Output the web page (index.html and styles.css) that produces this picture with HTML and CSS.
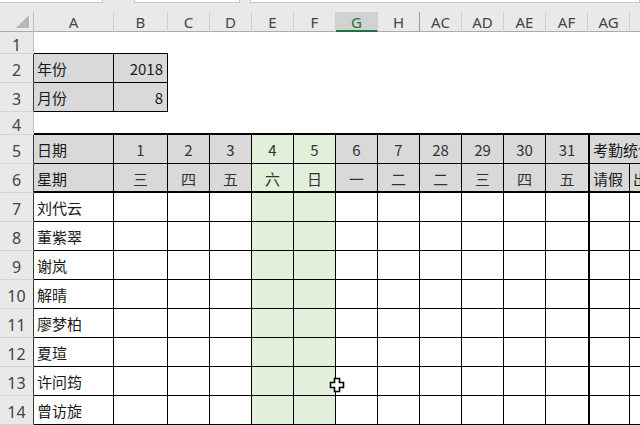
FILE: index.html
```html
<!DOCTYPE html>
<html lang="zh-CN">
<head>
<meta charset="utf-8">
<title>考勤表</title>
<link rel="stylesheet" href="styles.css">
</head>
<body>
<div class="app">
  <div class="fbar">
    <div class="fbox name"></div>
    <div class="fbox mid"></div>
    <div class="fbox formula"></div>
  </div>
  <div class="sheet">
    <!-- column headers -->
    <div class="ch corner"><span class="tri"></span></div>
    <div class="ch">A</div>
    <div class="ch">B</div>
    <div class="ch">C</div>
    <div class="ch">D</div>
    <div class="ch">E</div>
    <div class="ch">F</div>
    <div class="ch sel">G</div>
    <div class="ch hid">H</div>
    <div class="ch">AC</div>
    <div class="ch">AD</div>
    <div class="ch">AE</div>
    <div class="ch">AF</div>
    <div class="ch">AG</div>
    <div class="ch">AH</div>

    <!-- row 1 -->
    <div class="rh">1</div>
    <div class="cell bb"></div><div class="cell bb"></div>
    <div class="cell"></div><div class="cell"></div><div class="cell"></div><div class="cell"></div><div class="cell"></div><div class="cell"></div>
    <div class="cell"></div><div class="cell"></div><div class="cell"></div><div class="cell"></div><div class="cell"></div><div class="cell"></div>

    <!-- row 2 -->
    <div class="rh rk">2</div>
    <div class="cell k g l">年份</div><div class="cell k g r">2018</div>
    <div class="cell"></div><div class="cell"></div><div class="cell"></div><div class="cell"></div><div class="cell"></div><div class="cell"></div>
    <div class="cell"></div><div class="cell"></div><div class="cell"></div><div class="cell"></div><div class="cell"></div><div class="cell"></div>

    <!-- row 3 -->
    <div class="rh rk">3</div>
    <div class="cell k g l">月份</div><div class="cell k g r">8</div>
    <div class="cell"></div><div class="cell"></div><div class="cell"></div><div class="cell"></div><div class="cell"></div><div class="cell"></div>
    <div class="cell"></div><div class="cell"></div><div class="cell"></div><div class="cell"></div><div class="cell"></div><div class="cell"></div>

    <!-- row 4 -->
    <div class="rh">4</div>
    <div class="cell bb2"></div><div class="cell bb2"></div><div class="cell bb2"></div><div class="cell bb2"></div><div class="cell bb2"></div><div class="cell bb2"></div><div class="cell bb2"></div>
    <div class="cell bb2"></div><div class="cell bb2"></div><div class="cell bb2"></div><div class="cell bb2"></div><div class="cell bb2"></div><div class="cell bb2"></div><div class="cell bb2"></div>

    <!-- row 5 -->
    <div class="rh rk">5</div>
    <div class="cell k g l">日期</div>
    <div class="cell k g c">1</div>
    <div class="cell k g c">2</div>
    <div class="cell k g c">3</div>
    <div class="cell k gr c">4</div>
    <div class="cell k gr c">5</div>
    <div class="cell k g c">6</div>
    <div class="cell k g c">7</div>
    <div class="cell k g c">28</div>
    <div class="cell k g c">29</div>
    <div class="cell k g c">30</div>
    <div class="cell k g c nr">31</div>
    <div class="cell k g l bl2 span2">考勤统计</div>

    <!-- row 6 -->
    <div class="rh rk">6</div>
    <div class="cell k g l bb2">星期</div>
    <div class="cell k g c bb2">三</div>
    <div class="cell k g c bb2">四</div>
    <div class="cell k g c bb2">五</div>
    <div class="cell k gr c bb2">六</div>
    <div class="cell k gr c bb2">日</div>
    <div class="cell k g c bb2">一</div>
    <div class="cell k g c bb2">二</div>
    <div class="cell k g c bb2">二</div>
    <div class="cell k g c bb2">三</div>
    <div class="cell k g c bb2">四</div>
    <div class="cell k g c bb2 nr">五</div>
    <div class="cell k g l bb2 bl2">请假</div>
    <div class="cell k g l bb2">出勤</div>

    <!-- row 7 -->
    <div class="rh rk">7</div>
    <div class="cell k l">刘代云</div>
    <div class="cell k"></div><div class="cell k"></div><div class="cell k"></div>
    <div class="cell k gr"></div><div class="cell k gr"></div>
    <div class="cell k"></div><div class="cell k"></div><div class="cell k"></div><div class="cell k"></div><div class="cell k"></div>
    <div class="cell k nr"></div><div class="cell k bl2"></div><div class="cell k"></div>

    <!-- row 8 -->
    <div class="rh rk">8</div>
    <div class="cell k l">董紫翠</div>
    <div class="cell k"></div><div class="cell k"></div><div class="cell k"></div>
    <div class="cell k gr"></div><div class="cell k gr"></div>
    <div class="cell k"></div><div class="cell k"></div><div class="cell k"></div><div class="cell k"></div><div class="cell k"></div>
    <div class="cell k nr"></div><div class="cell k bl2"></div><div class="cell k"></div>

    <!-- row 9 -->
    <div class="rh rk">9</div>
    <div class="cell k l">谢岚</div>
    <div class="cell k"></div><div class="cell k"></div><div class="cell k"></div>
    <div class="cell k gr"></div><div class="cell k gr"></div>
    <div class="cell k"></div><div class="cell k"></div><div class="cell k"></div><div class="cell k"></div><div class="cell k"></div>
    <div class="cell k nr"></div><div class="cell k bl2"></div><div class="cell k"></div>

    <!-- row 10 -->
    <div class="rh rk">10</div>
    <div class="cell k l">解晴</div>
    <div class="cell k"></div><div class="cell k"></div><div class="cell k"></div>
    <div class="cell k gr"></div><div class="cell k gr"></div>
    <div class="cell k"></div><div class="cell k"></div><div class="cell k"></div><div class="cell k"></div><div class="cell k"></div>
    <div class="cell k nr"></div><div class="cell k bl2"></div><div class="cell k"></div>

    <!-- row 11 -->
    <div class="rh rk">11</div>
    <div class="cell k l">廖梦柏</div>
    <div class="cell k"></div><div class="cell k"></div><div class="cell k"></div>
    <div class="cell k gr"></div><div class="cell k gr"></div>
    <div class="cell k"></div><div class="cell k"></div><div class="cell k"></div><div class="cell k"></div><div class="cell k"></div>
    <div class="cell k nr"></div><div class="cell k bl2"></div><div class="cell k"></div>

    <!-- row 12 -->
    <div class="rh rk">12</div>
    <div class="cell k l">夏瑄</div>
    <div class="cell k"></div><div class="cell k"></div><div class="cell k"></div>
    <div class="cell k gr"></div><div class="cell k gr"></div>
    <div class="cell k"></div><div class="cell k"></div><div class="cell k"></div><div class="cell k"></div><div class="cell k"></div>
    <div class="cell k nr"></div><div class="cell k bl2"></div><div class="cell k"></div>

    <!-- row 13 -->
    <div class="rh rk">13</div>
    <div class="cell k l">许问筠</div>
    <div class="cell k"></div><div class="cell k"></div><div class="cell k"></div>
    <div class="cell k gr"></div><div class="cell k gr"></div>
    <div class="cell k"></div><div class="cell k"></div><div class="cell k"></div><div class="cell k"></div><div class="cell k"></div>
    <div class="cell k nr"></div><div class="cell k bl2"></div><div class="cell k"></div>

    <!-- row 14 -->
    <div class="rh rk">14</div>
    <div class="cell k l">曾访旋</div>
    <div class="cell k"></div><div class="cell k"></div><div class="cell k"></div>
    <div class="cell k gr"></div><div class="cell k gr"></div>
    <div class="cell k"></div><div class="cell k"></div><div class="cell k"></div><div class="cell k"></div><div class="cell k"></div>
    <div class="cell k nr"></div><div class="cell k bl2"></div><div class="cell k"></div>
  </div>
  <svg class="cursor" width="16" height="16" viewBox="0 0 16 16" aria-hidden="true">
    <path d="M5.5 1.5 H10.5 V5.5 H14.5 V10.5 H10.5 V14.5 H5.5 V10.5 H1.5 V5.5 H5.5 Z" fill="#fff" stroke="#000" stroke-width="1.6" stroke-linejoin="miter"/>
  </svg>
</div>
</body>
</html>
```
FILE: styles.css
```css
html, body {
  margin: 0;
  padding: 0;
  background: #fff;
  overflow: hidden;
}
.app {
  position: relative;
  width: 640px;
  height: 425px;
  overflow: hidden;
  font-family: "Noto Sans CJK SC", "Noto Sans", sans-serif;
}
.fbar {
  height: 12px;
  background: #e9e9e9;
  display: flex;
  align-items: flex-start;
}
.fbox {
  height: 3px;
  background: #fff;
  border: 1px solid #c8c8c8;
  border-top: none;
  box-sizing: border-box;
}
.fbox.name { width: 107px; margin-left: -1px; }
.fbox.mid { width: 108px; margin-left: 31px; }
.fbox.formula { width: 400px; margin-left: 10px; }

.sheet {
  display: grid;
  grid-template-columns: 34px 80px 54px repeat(12, 42px);
  grid-template-rows: 20px 22px 29px 29px 23px 29px 29px repeat(8, 29px);
  width: 700px;
}
.ch {
  background: #e9e9e9;
  border-right: 1px solid #d0d0d0;
  border-bottom: 1px solid #ababab;
  box-sizing: border-box;
  display: flex;
  align-items: center;
  justify-content: center;
  font-family: "Noto Sans", "Open Sans", sans-serif;
  font-size: 15px;
  color: #444;
  padding-top: 1px;
}
.ch.corner {
  position: relative;
  border-right: 1px solid #bdbdbd;
}
.tri {
  position: absolute;
  right: 4px;
  bottom: 3px;
  width: 0;
  height: 0;
  border-left: 13px solid transparent;
  border-bottom: 13px solid #b7b7b7;
}
.ch.sel {
  background: #d2d2d2;
  color: #217346;
  border-bottom: 2px solid #217346;
}
.ch.hid {
  border-right: 1px solid #9a9a9a;
}
.rh {
  background: #e9e9e9;
  border-right: 1px solid #bdbdbd;
  border-bottom: 1px solid #d4d4d4;
  box-sizing: border-box;
  display: flex;
  align-items: center;
  justify-content: center;
  font-family: "Noto Sans", "Open Sans", sans-serif;
  font-size: 16px;
  color: #444;
  padding-top: 4px;
}
.rh.rk {
  border-right-color: #3a3a3a;
}
.cell {
  box-sizing: border-box;
  display: flex;
  align-items: flex-end;
  padding-bottom: 3px;
  font-size: 15px;
  line-height: 20px;
  color: #1a1a1a;
  white-space: nowrap;
  overflow: hidden;
  min-width: 0;
}
.cell.k {
  border-right: 1px solid #000;
  border-bottom: 1px solid #000;
}
.cell.bb { border-bottom: 1px solid #000; }
.cell.bb2 { border-bottom: 2px solid #000; padding-bottom: 2px; }
.cell.nr { border-right: none; }
.cell.bl2 { border-left: 2px solid #000; }
.cell.span2 { grid-column: span 2; }
.cell.g { background: #d9d9d9; }
.cell.gr { background: #e2efda; }
.cell.l { justify-content: flex-start; padding-left: 3px; }
.cell.r { justify-content: flex-end; padding-right: 4px; }
.cell.c { justify-content: center; color: #333; }

.cursor {
  position: absolute;
  left: 329px;
  top: 377px;
}
```
